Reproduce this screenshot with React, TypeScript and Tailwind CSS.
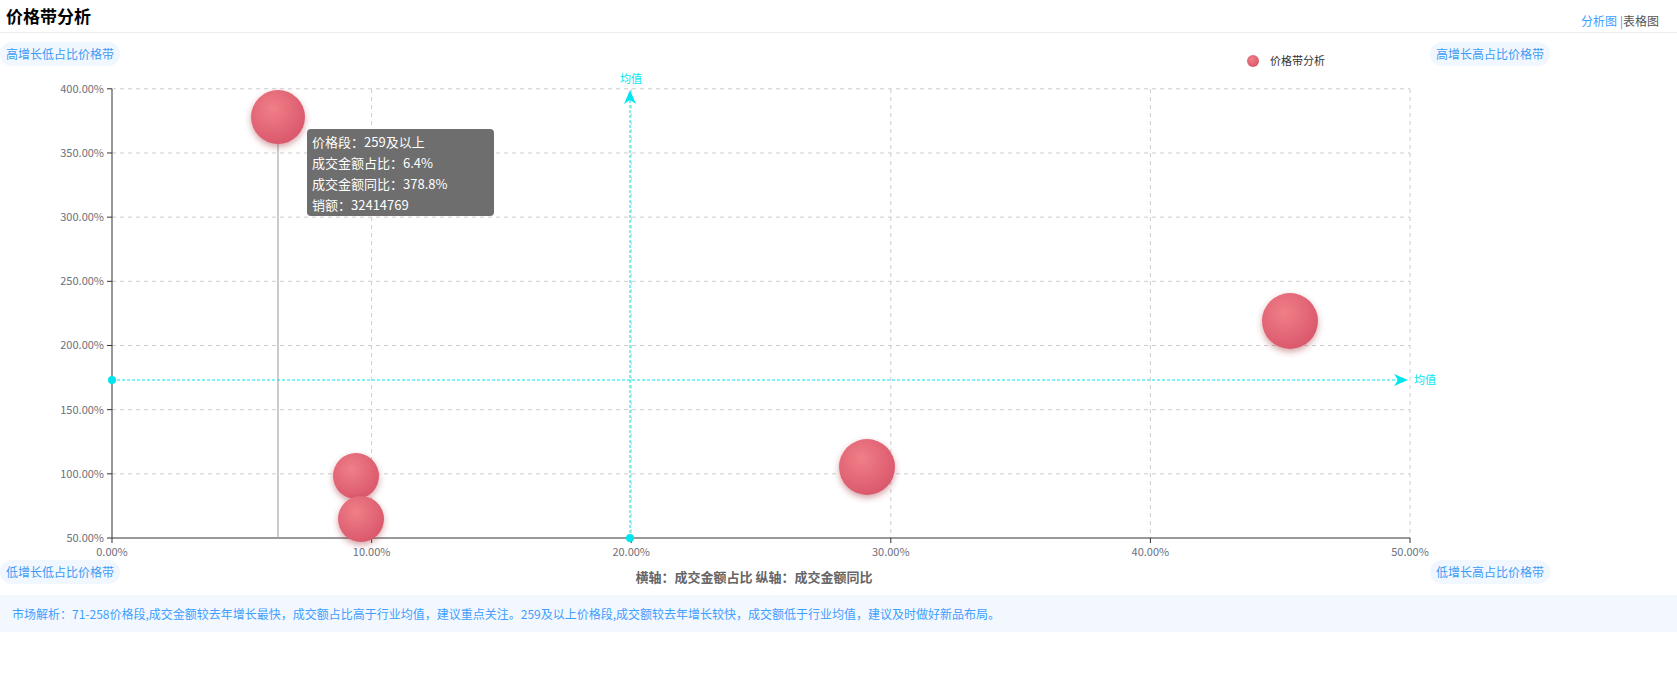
import React from "react";

const F = { fontFamily: '"Noto Sans CJK SC", "Liberation Sans", sans-serif' };

export default function App() {
  const x = (p: number) => 112 + p * 25.96;
  const y = (p: number) => 538 - (p - 50) * 1.2834;
  const yTicks = [50, 100, 150, 200, 250, 300, 350, 400];
  const xTicks = [0, 10, 20, 30, 40, 50];
  const bubbles = [
    { cx: 278, cy: 117, r: 27 },
    { cx: 356, cy: 476, r: 23 },
    { cx: 361, cy: 519, r: 23 },
    { cx: 867, cy: 467, r: 28 },
    { cx: 1290, cy: 321, r: 28 },
  ];
  const badge = "absolute rounded-full bg-[#f1f7ff] text-[#3d9bf5] text-[12px] px-[6px] h-[24px] leading-[24px]";
  return (
    <div className="w-[1677px] h-[676px] bg-white overflow-hidden" style={F}>
      <div className="h-[33px] border-b border-[#ececec] flex items-center justify-between px-[6px]">
        <div className="text-[17px] font-bold text-black">价格带分析</div>
        <div className="text-[12px] mt-[10px] mr-[12px]">
          <span className="text-[#409eff]">分析图 </span>
          <span className="text-[#409eff]">|</span>
          <span className="text-[#555]">表格图</span>
        </div>
      </div>
      <div className="relative h-[562px]">
        <svg width="1677" height="562" className="absolute left-0 top-0">
          <defs>
            <radialGradient id="g" cx="40%" cy="35%" r="70%">
              <stop offset="0%" stopColor="#f07f88" />
              <stop offset="100%" stopColor="#d9566a" />
            </radialGradient>
            <filter id="sh" x="-50%" y="-50%" width="200%" height="200%">
              <feDropShadow dx="0" dy="3" stdDeviation="3" floodColor="#a0303a" floodOpacity="0.45" />
            </filter>
          </defs>
          <g transform="translate(0,-33)">
            {yTicks.slice(1).map((t) => (
              <line key={t} x1={112} x2={1410} y1={y(t)} y2={y(t)} stroke="#ccc" strokeDasharray="4 4" />
            ))}
            {xTicks.slice(1).map((t) => (
              <line key={t} x1={x(t)} x2={x(t)} y1={89} y2={538} stroke="#ccc" strokeDasharray="4 4" />
            ))}
            <line x1={112} x2={112} y1={89} y2={538} stroke="#333" />
            <line x1={112} x2={1410} y1={538} y2={538} stroke="#333" />
            {yTicks.map((t) => (
              <g key={t}>
                <line x1={107} x2={112} y1={y(t)} y2={y(t)} stroke="#333" />
                <text x={104} y={y(t) + 4} textAnchor="end" fontSize="11" fill="#6e7079">{t}.00%</text>
              </g>
            ))}
            {xTicks.map((t) => (
              <g key={t}>
                <line x1={x(t)} x2={x(t)} y1={538} y2={543} stroke="#333" />
                <text x={x(t)} y={556} textAnchor="middle" fontSize="11" fill="#6e7079">{t}.00%</text>
              </g>
            ))}
            <line x1={278} x2={278} y1={117} y2={538} stroke="#999" />
            <line x1={630} x2={630} y1={538} y2={96} stroke="#00e5ee" strokeDasharray="3 2" />
            <path d="M630 90 L636 104 L630 100 L624 104 Z" fill="#00e5ee" />
            <circle cx={630} cy={538} r={4} fill="#00e5ee" />
            <text x={631} y={83} textAnchor="middle" fontSize="11" fill="#00e5ee">均值</text>
            <line x1={112} x2={1402} y1={380} y2={380} stroke="#00e5ee" strokeDasharray="3 2" />
            <path d="M1408 380 L1394 374 L1398 380 L1394 386 Z" fill="#00e5ee" />
            <circle cx={112} cy={380} r={4} fill="#00e5ee" />
            <text x={1414} y={384} fontSize="11" fill="#00e5ee">均值</text>
            {bubbles.map((b, i) => (
              <circle key={i} cx={b.cx} cy={b.cy} r={b.r} fill="url(#g)" filter="url(#sh)" />
            ))}
            <circle cx={1253} cy={61} r={6} fill="url(#g)" />
            <text x={1270} y={65} fontSize="11" fill="#333">价格带分析</text>
            <text x={754} y={582} textAnchor="middle" fontSize="13" fontWeight="bold" fill="#666">横轴：成交金额占比  纵轴：成交金额同比</text>
          </g>
        </svg>
        <div className={badge + " left-0 top-[9px]"}>高增长低占比价格带</div>
        <div className={badge + " left-[1430px] top-[9px]"}>高增长高占比价格带</div>
        <div className={badge + " left-0 top-[527px]"}>低增长低占比价格带</div>
        <div className={badge + " left-[1430px] top-[527px]"}>低增长高占比价格带</div>
        <div className="absolute left-[307px] top-[96px] w-[187px] h-[87px] rounded-[4px] bg-[#6e6e6e] text-white text-[13px] leading-[21px] px-[5px] py-[2px]">
          <div>价格段：259及以上</div>
          <div>成交金额占比：6.4%</div>
          <div>成交金额同比：378.8%</div>
          <div>销额：32414769</div>
        </div>
      </div>
      <div className="h-[37px] bg-[#f3f8ff] flex items-center px-[12px] text-[12px] text-[#409eff]">
        市场解析：71-258价格段,成交金额较去年增长最快，成交额占比高于行业均值，建议重点关注。259及以上价格段,成交额较去年增长较快，成交额低于行业均值，建议及时做好新品布局。
      </div>
    </div>
  );
}
